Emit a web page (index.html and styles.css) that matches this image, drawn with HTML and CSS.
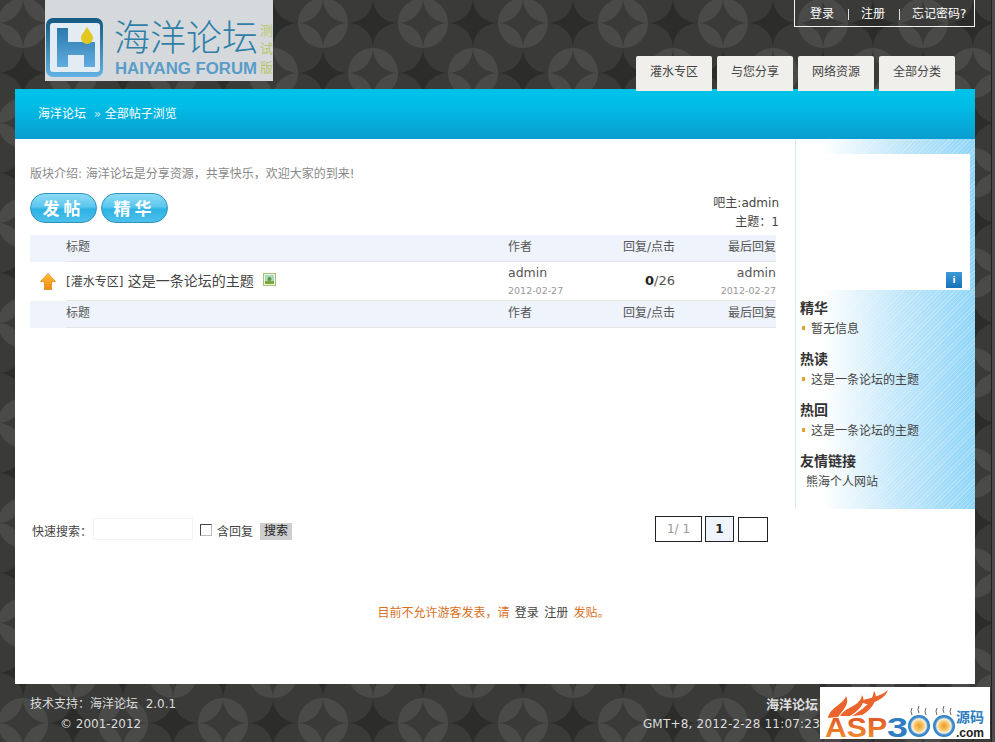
FILE: index.html
```html
<!DOCTYPE html>
<html lang="zh">
<head>
<meta charset="utf-8">
<title>海洋论坛</title>
<link rel="stylesheet" href="styles.css">
</head>
<body>
<div class="page">
  <header class="head">
    <svg class="logo" width="228" height="81" viewBox="0 0 228 81">
      <defs>
        <linearGradient id="lg" x1="0" y1="0" x2="0" y2="1"><stop offset="0" stop-color="#125a80"/><stop offset="1" stop-color="#62b2e4"/></linearGradient>
        <linearGradient id="lh" x1="0" y1="0" x2="0" y2="1"><stop offset="0" stop-color="#2a78ac"/><stop offset="1" stop-color="#62ade0"/></linearGradient>
      </defs>
      <rect width="228" height="81" fill="#d6d9dc"/>
      <rect x="1" y="18" width="57" height="59" rx="7" fill="url(#lg)"/>
      <rect x="5" y="23" width="50" height="49" rx="3" fill="#e2ecf2"/>
      <path d="M12 28H23V42H50V67H39V55H23V67H12Z" fill="url(#lh)"/>
      <path d="M42 27c3 5 6 8 6 11a6 6 0 0 1-12 0c0-3 3-6 6-11z" fill="#e2c81e"/>
      <text x="69" y="51" class="logo-cn">海洋论坛</text>
      <text x="70" y="74" class="logo-en" textLength="142" lengthAdjust="spacingAndGlyphs">HAIYANG FORUM</text>
      <text x="215" y="35" class="logo-side">测</text>
      <text x="215" y="53" class="logo-side">试</text>
      <text x="215" y="72" class="logo-side">版</text>
    </svg>
    <div class="head-right">
      <nav class="toplinks"><a>登录</a><i></i><a>注册</a><i></i><a>忘记密码?</a></nav>
      <nav class="tabs"><a>灌水专区</a><a>与您分享</a><a>网络资源</a><a>全部分类</a></nav>
    </div>
  </header>

  <div class="band">海洋论坛 <span class="sep">&nbsp;»</span> 全部帖子浏览</div>

  <div class="sheet">
    <div class="upper">
      <main class="main">
        <p class="intro">版块介绍: 海洋论坛是分享资源，共享快乐，欢迎大家的到来!</p>
        <div class="tools">
          <div class="pills"><a class="pill">发帖</a><a class="pill">精华</a></div>
          <div class="owner"><div>吧主:admin</div><div>主题：1</div></div>
        </div>
        <div class="thread">
          <div class="row hdr"><span class="ico"></span><div class="cells"><span class="c-title">标题</span><span class="c-author">作者</span><span class="c-num">回复/点击</span><span class="c-last">最后回复</span></div></div>
          <div class="row item">
            <span class="ico">
              <svg width="16" height="17" viewBox="0 0 16 17"><defs><linearGradient id="ar" x1="0" y1="0" x2="0" y2="1"><stop offset="0" stop-color="#ffc23a"/><stop offset="1" stop-color="#f38a0c"/></linearGradient></defs><path d="M8 .5 15.500 8.500H11.500V16.500H4.500V8.500H.5z" fill="url(#ar)" stroke="#e07c10" stroke-width=".7"/></svg>
            </span>
            <div class="cells">
              <span class="c-title"><span class="tag">[灌水专区]</span> 这是一条论坛的主题
                <svg class="pic" width="13" height="13" viewBox="0 0 13 13"><rect x=".5" y=".5" width="12" height="12" fill="#eef6d8" stroke="#a9bf7c"/><rect x="2" y="2" width="9" height="6" fill="#a8d8c8"/><rect x="2" y="8" width="9" height="3" fill="#7aa83f"/><circle cx="6.500" cy="6" r="2" fill="#5b9a35"/></svg>
              </span>
              <span class="c-author"><b>admin</b><small>2012-02-27</small></span>
              <span class="c-num"><strong>0</strong>/26</span>
              <span class="c-last"><b>admin</b><small>2012-02-27</small></span>
            </div>
          </div>
          <div class="row hdr"><span class="ico"></span><div class="cells"><span class="c-title">标题</span><span class="c-author">作者</span><span class="c-num">回复/点击</span><span class="c-last">最后回复</span></div></div>
        </div>
      </main>
      <aside class="side">
        <div class="ad"><span class="ad-i">i</span></div>
        <h3>精华</h3>
        <ul><li>暂无信息</li></ul>
        <h3>热读</h3>
        <ul><li>这是一条论坛的主题</li></ul>
        <h3>热回</h3>
        <ul><li>这是一条论坛的主题</li></ul>
        <h3>友情链接</h3>
        <p class="friend">熊海个人网站</p>
      </aside>
    </div>

    <div class="searchbar">
      <form class="search">
        <span class="lbl">快速搜索：</span>
        <span class="field"></span>
        <span class="check"></span>
        <span class="lbl">含回复</span>
        <span class="go">搜索</span>
      </form>
      <div class="pager"><span class="p-info">1/ 1</span><span class="p-cur">1</span><span class="p-next"></span></div>
    </div>

    <p class="notice">目前不允许游客发表，请 <a>登录</a> <a>注册</a> 发贴。</p>
  </div>

  <footer class="foot">
    <div class="foot-l"><div>技术支持：海洋论坛&nbsp; 2.0.1</div><div class="copy">© 2001-2012</div></div>
    <div class="foot-r"><div class="brand">海洋论坛</div><div class="gmt">GMT+8, 2012-2-28 11:07:23</div></div>
  </footer>
</div>

<svg class="mark" width="170" height="52" viewBox="0 0 170 52">
  <defs>
    <linearGradient id="ft" x1="0" y1="0" x2="0" y2="1"><stop offset="0" stop-color="#e04a2a"/><stop offset="1" stop-color="#f39a2a"/></linearGradient>
    <radialGradient id="egg"><stop offset="0" stop-color="#f09a20"/><stop offset=".4" stop-color="#f6c66a"/><stop offset=".65" stop-color="#f8efdc"/><stop offset=".8" stop-color="#3f8fd0"/><stop offset="1" stop-color="#2f7ec2"/></radialGradient>
  </defs>
  <rect width="170" height="52" fill="#fff"/>
  <path d="M8 31C10 20 24 17 26 9 30 16 24 22 18 30zM20 29C26 19 40 20 42 8 47 16 38 24 30 29zM32 29C42 22 52 17 54 4 60 12 50 24 42 28zM38 14C46 12 60 10 68 3 66 10 56 16 46 17z" fill="#ea642c"/>
  <text x="5" y="50" class="mark-a" textLength="62" lengthAdjust="spacingAndGlyphs">ASP</text>
  <text x="67" y="50" class="mark-b" textLength="21" lengthAdjust="spacingAndGlyphs">3</text>
  <circle cx="99" cy="39" r="11" fill="url(#egg)"/>
  <circle cx="124" cy="39" r="11" fill="url(#egg)"/>
  <path d="M92 28q-2-4 0-7M99 26q-2-4 0-7M106 28q-2-4 0-7M117 28q-2-4 0-7M124 26q-2-4 0-7M131 28q-2-4 0-7" stroke="#666" fill="none"/>
  <text x="136" y="35" class="mark-c">源码</text>
  <text x="136" y="50" class="mark-d">.com</text>
</svg>
</body>
</html>
```

FILE: styles.css
```css
* { box-sizing: border-box; }
html, body { margin: 0; height: 100%; }
body {
  background-color: #2c2c2b;
  background-image: url("data:image/svg+xml,%3Csvg xmlns='http://www.w3.org/2000/svg' width='100' height='100'%3E%3Cg fill='%233a3b39'%3E%3Ccircle cx='25' cy='25' r='25'/%3E%3Ccircle cx='75' cy='25' r='25'/%3E%3Ccircle cx='25' cy='75' r='25'/%3E%3Ccircle cx='75' cy='75' r='25'/%3E%3Ccircle cx='50' cy='50' r='25'/%3E%3Ccircle cx='0' cy='0' r='25'/%3E%3Ccircle cx='100' cy='0' r='25'/%3E%3Ccircle cx='0' cy='100' r='25'/%3E%3Ccircle cx='100' cy='100' r='25'/%3E%3C/g%3E%3Cpath fill='%234a4a49' d='M25 0a25 25 0 0 1-25 25a25 25 0 0 1 25-25zM100 25a25 25 0 0 1-25-25a25 25 0 0 1 25 25zM75 100a25 25 0 0 1 25-25a25 25 0 0 1-25 25zM0 75a25 25 0 0 1 25 25a25 25 0 0 1-25-25zM75 50a25 25 0 0 1-25 25a25 25 0 0 1 25-25zM50 75a25 25 0 0 1-25-25a25 25 0 0 1 25 25zM25 50a25 25 0 0 1 25-25a25 25 0 0 1-25 25zM50 25a25 25 0 0 1 25 25a25 25 0 0 1-25-25z'/%3E%3C/svg%3E");
  background-position: 23px 23px;
  font: 12px/1.5 "DejaVu Sans", "Noto Sans CJK SC", sans-serif;
  color: #444;
  overflow: hidden;
  position: relative;
}
body::after {
  content: ""; position: absolute; right: 0; top: 0; bottom: 0; width: 3px;
  background: #4c4c4c; border-left: 1px solid #222;
}
.page { width: 995px; padding: 0 20px 0 15px; }

.head { display: flex; justify-content: space-between; height: 89px; }
.logo { display: block; margin-left: 30px; flex: none; }
.logo-cn { font: 300 36px "Noto Sans CJK SC", sans-serif; fill: #2f7fa8; }
.logo-en { font: bold 16px "Liberation Sans", sans-serif; fill: #5a9cc8; }
.logo-side { font: 13px "Noto Sans CJK SC", sans-serif; fill: #b8c56e; }
.head-right { display: flex; flex-direction: column; align-items: flex-end; }
.toplinks {
  flex: none; width: 181px; height: 27px; border: 1px solid #f2f2f2; border-top: 0;
  display: flex; align-items: center; padding: 2px 0 0 15px; color: #fff;
}
.toplinks i { width: 1px; height: 11px; background: #ddd; margin: 0 12px 0 14px; }
.tabs { flex: none; display: flex; gap: 5px; margin: 29px 20px 0 0; height: 35px; position: relative; z-index: 1; }
.tabs a {
  width: 76px; height: 35px; background: #f1efec; color: #444; text-align: center;
  line-height: 33px; border-radius: 2px 2px 0 0;
}

.band {
  height: 50px; padding: 0 0 0 23px; line-height: 51px; color: #fff;
  background: linear-gradient(#00c3e9 0, #00bee6 30%, #0a9dcf 100%);
}
.sep { color: #bfeaf7; }

.sheet { background: #fff; height: 545px; }
.upper { display: flex; height: 370px; }
.main { width: 780px; padding-left: 15px; }
.intro { margin: 0; padding-top: 26px; height: 54px; color: #888; line-height: 18px; }
.tools { display: flex; justify-content: space-between; height: 42px; padding-right: 16px; }
.pills { display: flex; gap: 4px; }
.pill {
  width: 67px; height: 30px; border-radius: 15px; border: 1px solid #2d93ba; color: #fff;
  background: linear-gradient(#8fdcf6 0, #5cc7ee 45%, #2db2e4 55%, #4dc0ea 100%);
  font-weight: bold; font-size: 17px; line-height: 27px; text-align: center; letter-spacing: 4px;
  font-family: "Noto Sans CJK SC", sans-serif;
}
.owner { text-align: right; line-height: 19px; padding-top: 1px; color: #444; }
.thread { width: 746px; }
.row { display: flex; }
.ico { width: 36px; flex: none; display: flex; align-items: center; justify-content: center; padding-right: 1px; }
.hdr .ico { background: #eef3fc; }
.cells { flex: 1; display: grid; grid-template-columns: 442px 96px 71px 1fr; }
.hdr { height: 27px; color: #555; }
.hdr .cells { background: #eef3fc; border-bottom: 1px solid #e6e6e6; line-height: 24px; }
.item { height: 39px; }
.item .cells { border-bottom: 1px solid #e6e6e6; align-items: center; }
.c-num { text-align: right; }
.c-last { text-align: right; }
.c-title { font-size: 14px; color: #444; white-space: nowrap; }
.hdr .c-title { font-size: 12px; color: #555; }
.tag { font-size: 12px; }
.pic { margin-left: 5px; vertical-align: 0; }
.item b { display: block; font-weight: normal; color: #555; line-height: 16px; font-size: 12.500px; }
.item small { display: block; font-size: 9.500px; color: #999; line-height: 14px; margin-top: 3px; }
.item .c-num { color: #555; font-size: 13px; }
.item strong { color: #222; }

.side {
  width: 180px; height: 370px; border-left: 1px solid #dce9ef; padding: 15px 5px 0 4px;
  background:
    repeating-linear-gradient(135deg, rgba(255,255,255,.22) 0 1px, rgba(255,255,255,0) 1px 3px),
    linear-gradient(90deg, #fff 0, #fff 15%, #c5e8fa 55%, #8fd5f8 100%);
}
.ad { height: 136px; background: #fff; margin-bottom: 9px; position: relative; }
.ad-i {
  position: absolute; right: 8px; bottom: 2px; width: 16px; height: 16px; background: linear-gradient(#3f9ad8, #1570b8);
  color: #fff; font: bold 9px/16px "DejaVu Sans", sans-serif; text-align: center;
}
.side h3 { margin: 0; font: bold 14px/18px "Noto Sans CJK SC", sans-serif; color: #333; height: 21px; }
.ad + h3 { margin-top: -1px; }
.side ul { margin: 0 0 9px; padding: 0; list-style: none; height: 21px; }
.side li { padding-left: 11px; line-height: 21px; position: relative; color: #444; }
.side li::before {
  content: ""; position: absolute; left: 2px; top: 7px; width: 3px; height: 4px; background: #e8a02c;
}
.friend { margin: 0; padding-left: 6px; line-height: 21px; color: #444; }

.searchbar { display: flex; justify-content: space-between; height: 34px; padding: 7px 207px 0 17px; }
.search { display: flex; align-items: center; height: 26px; color: #444; }
.lbl { padding-top: 5px; }
.field { width: 100px; height: 22px; border: 1px solid #f3f3f3; margin: 0 7px 0 1px; }
.check { width: 12px; height: 12px; border: 1px solid #444; border-right-color: #bbb; border-bottom-color: #bbb; margin: 1px 5px 0 0; }
.go { width: 32px; height: 17px; background: #cfcfcf; color: #222; text-align: center; line-height: 17px; margin: 4px 0 0 7px; }
.pager { display: flex; gap: 3px; }
.pager span { height: 26px; border: 1px solid #222; text-align: center; line-height: 24px; }
.p-info { width: 47px; color: #999; }
.p-cur { width: 29px; background: #eef3fc; color: #222; font-weight: bold; }
.pager .p-next { width: 30px; height: 25px; margin-top: 1px; margin-left: 1px; }
.notice { margin: 61px 0 0 1px; text-align: center; width: 955px; color: #d9701e; line-height: 18px; word-spacing: 1.500px; }
.notice a { color: #444; }

.foot { display: flex; justify-content: space-between; color: #ddd; padding: 10px 0 0 15px; line-height: 20px; }
.copy { padding-left: 30px; }
.foot-r { text-align: right; margin-right: 155px; }
.brand { font-weight: bold; padding-right: 2px; font-family: "Noto Sans CJK SC", sans-serif; font-size: 13px; }
.gmt { white-space: nowrap; letter-spacing: .2px; }

.mark { position: absolute; left: 820px; top: 687px; }
.mark-a, .mark-b { font: bold 27px "Liberation Sans", sans-serif; fill: url(#ft); }
.mark-b { fill: #2f7ec2; }
.mark-c { font: bold 14px "Noto Sans CJK SC", sans-serif; fill: #2f7ec2; }
.mark-d { font: bold 12px "Liberation Sans", sans-serif; fill: #222; }
```
